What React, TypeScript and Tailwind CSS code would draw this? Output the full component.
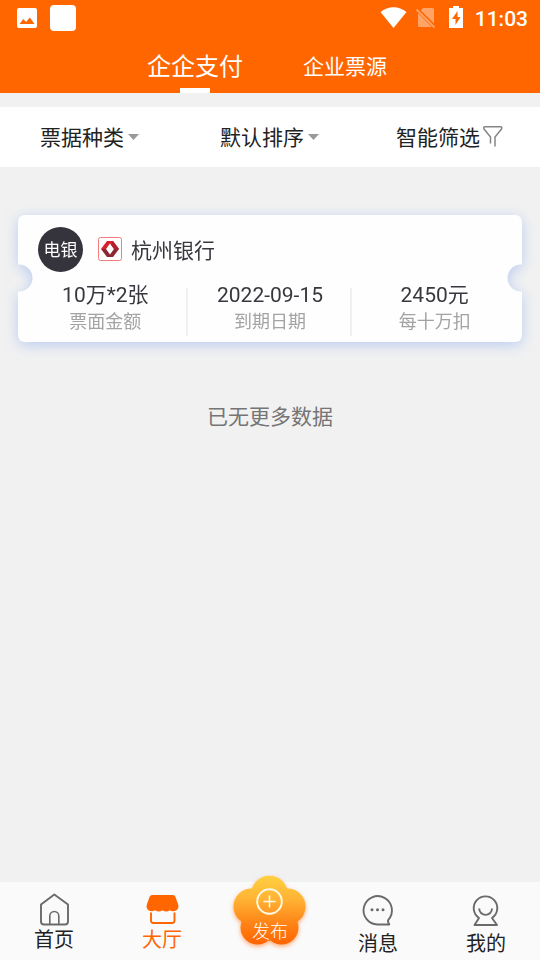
import { useState } from 'react';
import type { ReactNode } from 'react';

function StatusBar() {
  return (
    <div className="flex h-9 items-center justify-between pl-4 pr-3 text-white">
      <div className="flex items-center gap-3">
        <svg width="22" height="22" viewBox="0 0 22 22" aria-hidden="true">
          <path
            fill="currentColor"
            fillRule="evenodd"
            d="M3 1h16a2 2 0 0 1 2 2v16a2 2 0 0 1-2 2H3a2 2 0 0 1-2-2V3a2 2 0 0 1 2-2ZM3.500 17h15l-4.700-6.500-3.800 4.500-2.700-3Z"
          />
        </svg>
        <span className="size-[26px] rounded bg-white" />
      </div>
      <div className="flex items-center">
        <svg width="28" height="24" viewBox="0 0 28 24" aria-hidden="true">
          <path fill="currentColor" d="M1.500 6C9-.3 20-.3 27.500 6L14.500 22Z" />
        </svg>
        <svg className="ml-2 opacity-40" width="22" height="24" viewBox="0 0 22 24" aria-hidden="true">
          <path fill="currentColor" d="M8 2h9.500a1.500 1.500 0 0 1 1.500 1.500v14L5.800 4.300ZM3 7 16.800 21H4.500A1.500 1.500 0 0 1 3 19.500Z" />
          <path stroke="currentColor" strokeWidth="1.800" d="m1.500 3.500 18 18" />
        </svg>
        <svg className="ml-2" width="22" height="24" viewBox="0 0 22 24" aria-hidden="true">
          <path
            fill="currentColor"
            fillRule="evenodd"
            d="M8 0h6v2h4v20H4V2h4ZM12.500 5 7 13h3.500v6L15.500 11h-3Z"
          />
        </svg>
        <span className="ml-2 pt-0.5 font-['Roboto',sans-serif] text-[21px] leading-6 font-medium">11:03</span>
      </div>
    </div>
  );
}

const tabs = ['企企支付', '企业票源'];

function Tabs() {
  const [active, setActive] = useState(0);
  return (
    <div role="tablist" className="flex h-[57px] justify-center text-white">
      {tabs.map((tab, i) => (
        <button
          key={tab}
          type="button"
          role="tab"
          aria-selected={active === i}
          onClick={() => setActive(i)}
          className="flex w-[150px] flex-col items-center justify-between"
        >
          <span className={active === i ? 'pt-3 text-2xl leading-[38px]' : 'pt-3 text-[21px] leading-[38px]'}>{tab}</span>
          <span className={active === i ? 'h-[5px] w-[30px] bg-white' : 'h-[5px] w-[30px]'} />
        </button>
      ))}
    </div>
  );
}

function FilterSelect({ label }: { label: string }) {
  return (
    <label className="flex flex-1 items-center justify-center gap-1">
      <select aria-label={label} className="w-[84px] appearance-none bg-transparent p-0 pt-0.5 leading-8">
        <option>{label}</option>
      </select>
      <svg width="12" height="8" viewBox="0 0 12 8" aria-hidden="true">
        <path fill="#999" d="M0 1h11L5.500 7Z" />
      </svg>
    </label>
  );
}

function FilterBar() {
  return (
    <div className="mt-3.5 flex h-15 bg-white text-[21px] text-[#222]">
      <FilterSelect label="票据种类" />
      <FilterSelect label="默认排序" />
      <button type="button" className="flex flex-1 items-center justify-center gap-0.5 leading-8">
        <span className="pt-0.5">智能筛选</span>
        <svg width="22" height="24" viewBox="0 0 22 24" fill="none" stroke="#858585" strokeWidth="1.500" aria-hidden="true">
          <path d="M8.500 18.500V12L2 4Q1 1.800 3 1.800H18.500Q20.500 1.800 19.500 4L13 12V21.500" />
        </svg>
      </button>
    </div>
  );
}

function BankLogo() {
  return (
    <svg width="24" height="24" viewBox="0 0 24 24" aria-hidden="true">
      <rect x=".5" y=".5" width="23" height="23" rx="2" fill="#fffdfd" stroke="#f47c7c" />
      <path fill="#d8202c" d="M9 4h6l6 8h-5l-4-5.500L8 12H3Z" />
      <path fill="#8c2633" d="M3 12h5l4 5.500 4-5.500h5l-6 8H9Z" />
      <path fill="#b3202c" d="m15 4 6 8h-5l-3-4Z" />
    </svg>
  );
}

const facts = [
  { value: '10万*2张', label: '票面金额' },
  { value: '2022-09-15', label: '到期日期' },
  { value: '2450元', label: '每十万扣' },
];

function TicketCard() {
  return (
    <article className="mx-[18px] mt-12 drop-shadow-[0_3px_7px_rgba(150,180,240,0.6)]">
      <div className="rounded-md bg-[#fefefe] px-[5px] pt-3 pb-1.5 text-[#38373e] [mask-image:radial-gradient(circle_at_1px_63px,transparent_13px,black_14px),radial-gradient(circle_at_calc(100%_-_1px)_63px,transparent_13px,black_14px)] [mask-position:left,right] [mask-repeat:no-repeat] [mask-size:51%_100%]">
        <div className="flex items-center px-[15px]">
          <span className="flex size-[45px] items-center justify-center rounded-full bg-[#35343c] pt-0.5 text-[17px] text-white">
            电银
          </span>
          <span className="ml-[15px] pb-0.5">
            <BankLogo />
          </span>
          <h2 className="ml-[9px] pt-0.5 text-[21px] leading-8">杭州银行</h2>
        </div>
        <dl className="mt-2.5 flex items-end">
          {facts.map((fact, i) => (
            <div key={fact.label} className="flex flex-1 items-end">
              {i > 0 && <span className="-ml-0.5 h-12 w-0.5 bg-[#f0f0f2]" />}
              <div className="flex flex-1 flex-col items-center">
                <dt className="order-2 text-lg leading-7 text-[#a3a3a3]">{fact.label}</dt>
                <dd className="text-[21px] leading-[26px]">{fact.value}</dd>
              </div>
            </div>
          ))}
        </dl>
      </div>
    </article>
  );
}

function HomeIcon() {
  return (
    <svg width="36" height="34" viewBox="0 0 36 34" fill="none" stroke="#6a6a6a" strokeWidth="1.900" strokeLinejoin="round" aria-hidden="true">
      <path d="M18.300 2.500 32 12.500V29.500Q32 32.500 29 32.500H8Q5 32.500 5 29.500V12.500Z" />
      <path d="M13.800 32.500V24a4.500 4.500 0 0 1 9 0v8.500" strokeWidth="1.600" />
    </svg>
  );
}

function HallIcon() {
  return (
    <svg width="36" height="34" viewBox="0 0 36 34" fill="none" aria-hidden="true">
      <path
        fill="#ff6600"
        d="M8 3h21q1.500 0 2.300 1.500l2.700 7.500q1.500 4.500-1.800 6.500-3.500 1.600-6.300-.3-3.700 2.600-7.400 0-3.700 2.600-7.400 0-3 1.900-6.300.3Q1.500 16.500 3 12l2.700-7.500Q6.500 3 8 3Z"
      />
      <path stroke="#ff6600" strokeWidth="1.900" d="M7 20.500V28.500Q7 31 9.500 31H28Q30.500 31 30.500 28.500V20.500" />
    </svg>
  );
}

function MessageIcon() {
  return (
    <svg width="36" height="38" viewBox="0 0 36 38" fill="none" stroke="#6a6a6a" strokeWidth="1.900" strokeLinejoin="round" aria-hidden="true">
      <path d="M17.500 32.500A14.200 14.200 0 1 1 28.300 27.800Q27.300 29.500 29.300 32.500Z" />
      <g fill="#6a6a6a" stroke="none">
        <circle cx="12" cy="17.700" r="1.500" />
        <circle cx="17.500" cy="17.700" r="1.500" />
        <circle cx="23" cy="17.700" r="1.500" />
      </g>
    </svg>
  );
}

function ProfileIcon() {
  return (
    <svg width="36" height="38" viewBox="0 0 36 38" fill="none" stroke="#6a6a6a" strokeWidth="1.900" strokeLinejoin="round" aria-hidden="true">
      <path d="M11 26A11.800 11.800 0 1 1 24 26L29 33H6.500Z" />
      <path d="M11.200 16.500a6.400 6.400 0 0 0 12.800 0" />
    </svg>
  );
}

function NavItem({ icon, label, active }: { icon: ReactNode; label: string; active?: boolean }) {
  return (
    <a
      href="#"
      aria-current={active ? 'page' : undefined}
      className={
        active
          ? 'flex flex-1 flex-col items-center text-xl leading-7 text-[#ff6600]'
          : 'flex flex-1 flex-col items-center text-xl leading-7 text-[#222]'
      }
    >
      {icon}
      {label}
    </a>
  );
}

function PublishButton() {
  return (
    <div className="relative flex flex-1 justify-center">
      <button type="button" className="absolute -top-5 flex h-22 w-21 flex-col items-center justify-end pb-4 text-lg leading-6 text-white">
        <svg className="absolute inset-0" width="84" height="88" viewBox="0 0 84 88" aria-hidden="true">
          <defs>
            <linearGradient id="petals" gradientUnits="userSpaceOnUse" x1="0" y1="4" x2="0" y2="72">
              <stop offset="0" stopColor="#ffd042" />
              <stop offset=".35" stopColor="#ffb233" />
              <stop offset=".7" stopColor="#ff8316" />
              <stop offset="1" stopColor="#ff6500" />
            </linearGradient>
          </defs>
          <g fill="url(#petals)" className="drop-shadow-[0_2px_2px_rgba(255,102,0,0.5)]">
            <circle cx="41.500" cy="22" r="18.300" />
            <circle cx="23.500" cy="34.500" r="18" />
            <circle cx="59.500" cy="34.500" r="18" />
            <circle cx="29.500" cy="55.500" r="17" />
            <circle cx="53.500" cy="55.500" r="17" />
            <path d="M24 16.500h35L70 50 41.500 69 13 50Z" />
          </g>
          <g fill="none" stroke="#fffbe8">
            <circle cx="41.500" cy="29.500" r="12.300" strokeWidth="1.900" />
            <path d="M41.500 23.500v12M35.500 29.500h12" strokeWidth="1.500" />
          </g>
        </svg>
        <span className="relative font-light">发布</span>
      </button>
    </div>
  );
}

function BottomNav() {
  return (
    <nav className="flex h-[78px] bg-[#fafafa] pt-2.5">
      <NavItem icon={<HomeIcon />} label="首页" />
      <NavItem icon={<HallIcon />} label="大厅" active />
      <PublishButton />
      <NavItem icon={<MessageIcon />} label="消息" />
      <NavItem icon={<ProfileIcon />} label="我的" />
    </nav>
  );
}

export default function App() {
  return (
    <div className="flex min-h-screen flex-col bg-[#f1f1f1] font-['Roboto','Noto_Sans_CJK_SC',sans-serif]">
      <header className="bg-[#ff6600]">
        <StatusBar />
        <Tabs />
      </header>
      <main className="flex-1">
        <FilterBar />
        <TicketCard />
        <p className="mt-[59px] text-center text-[21px] leading-8 text-[#757575]">已无更多数据</p>
      </main>
      <BottomNav />
    </div>
  );
}
